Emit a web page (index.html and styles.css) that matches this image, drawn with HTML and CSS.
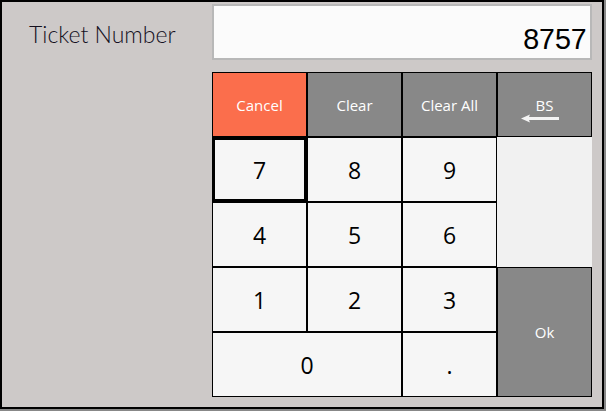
FILE: index.html
```html
<!DOCTYPE html>
<html lang="en">
<head>
    <meta charset="UTF-8">
    <meta name="viewport" content="width=device-width, initial-scale=1.0">
    <title>Ticket Number</title>
    <link rel="stylesheet" href="styles.css">
</head>
<body>
    <div class="window">
        <div class="label">Ticket Number</div>
        <div class="panel">
            <div class="display">8757</div>
            <div class="keypad">
                <button class="key key-cancel">Cancel</button>
                <button class="key key-action">Clear</button>
                <button class="key key-action">Clear All</button>
                <button class="key key-action key-bs">BS
                    <svg class="bs-arrow" width="38" height="9" viewBox="0 0 38 9">
                        <path d="M0 4.5 L9 0.5 L8 3 H38 V6 H8 L9 8.5 Z" fill="#f4f4f4"/>
                    </svg>
                </button>
                <button class="key key-num key-focus">7</button>
                <button class="key key-num">8</button>
                <button class="key key-num">9</button>
                <div class="key-blank"></div>
                <button class="key key-num">4</button>
                <button class="key key-num">5</button>
                <button class="key key-num">6</button>
                <button class="key key-num">1</button>
                <button class="key key-num">2</button>
                <button class="key key-num">3</button>
                <button class="key key-action key-ok">Ok</button>
                <button class="key key-num key-zero">0</button>
                <button class="key key-num">.</button>
            </div>
        </div>
    </div>
</body>
</html>
```

FILE: styles.css
```css
/* CSS styles */
html, body {
    margin: 0;
    padding: 0;
    height: 100%;
    background-color: #888;
}

.window {
    box-sizing: border-box;
    width: 604px;
    height: 409px;
    display: flex;
    padding: 2px 10px 10px 0;
    background-color: #cdc9c8;
    border: 2px solid #000;
    font-family: "Open Sans", "Liberation Sans", sans-serif;
}

.label {
    box-sizing: border-box;
    width: 210px;
    padding: 15px 0 0 27px;
    font-family: "Lato", "Open Sans", sans-serif;
    font-weight: 300;
    font-size: 23px;
    line-height: 30px;
    color: #14101e;
}

.panel {
    width: 380px;
    display: flex;
    flex-direction: column;
    gap: 12px;
}

.display {
    box-sizing: border-box;
    height: 56px;
    padding: 21px 4px 0 0;
    background-color: #fbfbfb;
    border: 2px solid #b8b8b8;
    text-align: right;
    font-family: "Liberation Mono", monospace;
    font-size: 29px;
    line-height: 30px;
    letter-spacing: -1.5px;
    color: #000;
}

.keypad {
    display: grid;
    grid-template-columns: repeat(4, 95px);
    grid-template-rows: repeat(5, 65px);
}

.key {
    box-sizing: border-box;
    margin: 0;
    padding: 0;
    border: 1px solid #000;
    border-radius: 0;
    font-family: inherit;
    font-size: 15px;
    color: #fff;
}

.key-cancel {
    background-color: #fb6e4c;
}

.key-action {
    background-color: #888;
}

.key-num {
    background-color: #f6f6f6;
    font-size: 23px;
    color: #000;
}

.key-focus {
    border-width: 3px;
}

.key-blank {
    grid-row: span 2;
    background-color: #f1f1f1;
}

.key-bs {
    position: relative;
}

.bs-arrow {
    position: absolute;
    left: 23px;
    top: 41px;
}

.key-ok {
    grid-row: span 2;
}

.key-zero {
    grid-column: span 2;
}
```
